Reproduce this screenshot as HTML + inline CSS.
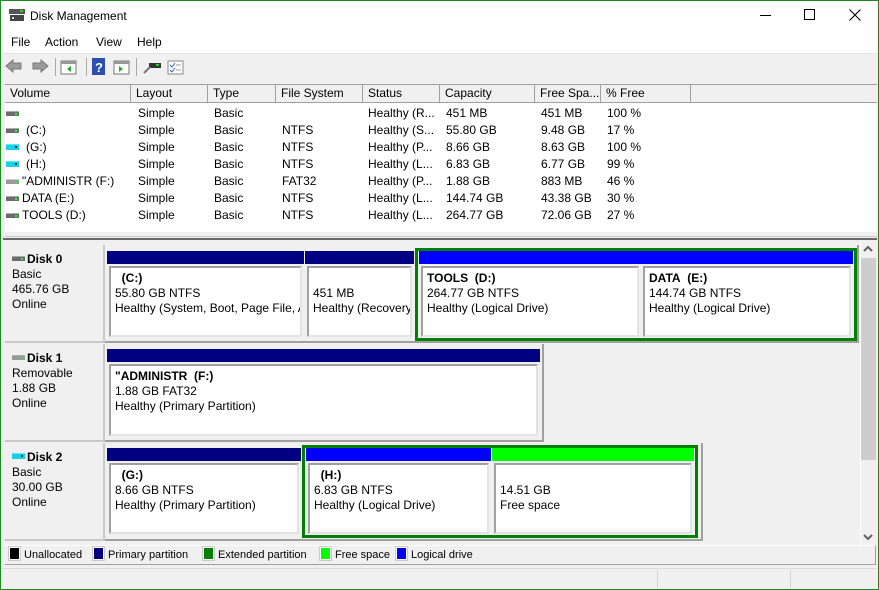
<!DOCTYPE html>
<html><head><meta charset="utf-8">
<style>
*{box-sizing:border-box;margin:0;padding:0}
body{width:879px;height:590px;position:relative;background:#f0f0f0;font-family:"Liberation Sans",sans-serif;font-size:12px;color:#000;overflow:hidden}
.a{position:absolute}
.t{position:absolute;white-space:nowrap;line-height:15px}
.hd{position:absolute;top:85px;height:18px;background:#f0f0f0;border-right:1px solid #a0a0a0;border-bottom:1px solid #a0a0a0;padding-left:5px;line-height:17px}
.row{position:absolute;left:5px;height:17px;line-height:17px;white-space:nowrap}
.row span{position:absolute}
.drv{position:absolute;top:6px;width:13px;height:5px;background:#6b6b6b;border-top:1px solid #aaa}
.drv:after{content:"";position:absolute;right:2px;top:1px;width:2px;height:2px;background:#2f2}
.drv.c{background:#1ccfe6;height:6px;top:5px;border-top:1px solid #5ee}
.drv.c:after{background:#333}
.p{position:absolute}
.bar{position:absolute;left:0;right:0;top:0;height:13px}
.box{position:absolute;left:2px;right:2px;top:15px;bottom:2px;background:#fff;border-top:2px solid #a0a0a0;border-left:2px solid #a0a0a0;border-right:2px solid #e3e3e3;border-bottom:2px solid #e3e3e3;padding:3px 0 0 4px}
.box div{line-height:15px;white-space:nowrap;overflow:hidden}
.b{font-weight:bold}
.disk{position:absolute;left:5px;width:100px;background:#f0f0f0;border-right:2px solid #c8c8c8;border-bottom:2px solid #c8c8c8;padding:7px 0 0 7px;line-height:15px}
.rowbox{position:absolute;border-right:2px solid #a0a0a0;border-bottom:2px solid #a0a0a0}
.ext{position:absolute;border:3px solid #008000}
.lg{position:absolute;top:547px;width:11px;height:13px;border:1px solid #fff;outline:1px solid #ccc}
.lt{position:absolute;top:548px;font-size:11px;line-height:15px;white-space:nowrap}
</style></head><body>
<div class="a" style="left:0;top:0;width:879px;height:590px;border:1px solid #1e8a1e;background:#f0f0f0"></div>
<div class="a" style="left:1px;top:1px;width:877px;height:52px;background:#fff"></div>
<svg class="a" style="left:9px;top:9px" width="16" height="14"><rect x="0" y="0" width="16" height="5" fill="#555"/><rect x="1" y="6" width="14" height="6" fill="#444"/><rect x="3" y="8" width="2" height="2" fill="#ddd"/><rect x="11" y="1" width="3" height="2" fill="#3c3"/></svg>
<div class="t" style="left:30px;top:9px">Disk Management</div>
<div class="a" style="left:760px;top:15px;width:11px;height:1px;background:#000"></div>
<div class="a" style="left:804px;top:9px;width:11px;height:11px;border:1px solid #000"></div>
<svg class="a" style="left:849px;top:9px" width="12" height="12"><path d="M0.5 0.5L11.5 11.5M11.5 0.5L0.5 11.5" stroke="#000" stroke-width="1.1"/></svg>
<div class="t" style="left:11px;top:35px">File</div>
<div class="t" style="left:45px;top:35px">Action</div>
<div class="t" style="left:96px;top:35px">View</div>
<div class="t" style="left:137px;top:35px">Help</div>
<div class="a" style="left:1px;top:53px;width:877px;height:1px;background:#e5e5e5"></div>
<svg class="a" style="left:5px;top:58px" width="180" height="18">
<path d="M1 8L8 2V5H16V11H8V14Z" fill="#9a9a9a" stroke="#7a7a7a"/>
<path d="M43 8L36 2V5H28V11H36V14Z" fill="#9a9a9a" stroke="#7a7a7a"/>
<rect x="50" y="0" width="1" height="18" fill="#aaa"/>
<rect x="56" y="3" width="15" height="13" fill="#fff" stroke="#777"/><rect x="56" y="3" width="15" height="3" fill="#999"/><path d="M66 8V14L62 11Z" fill="#2a2"/>
<rect x="81" y="0" width="1" height="18" fill="#aaa"/>
<rect x="87" y="0" width="13" height="17" fill="#2b4eb0"/><text x="90" y="14" fill="#fff" font-size="13" font-weight="bold" font-family="Liberation Sans">?</text>
<rect x="109" y="3" width="15" height="13" fill="#fff" stroke="#777"/><rect x="109" y="3" width="15" height="3" fill="#999"/><path d="M114 8V14L118 11Z" fill="#2a2"/>
<rect x="131" y="0" width="1" height="18" fill="#aaa"/>
<rect x="144" y="5" width="12" height="5" fill="#333"/><rect x="151" y="6" width="3" height="2" fill="#3c3"/><path d="M139 15L145 9" stroke="#777" stroke-width="2"/>
<rect x="163" y="3" width="15" height="13" fill="#fff" stroke="#888"/><path d="M165 7l2 2 3-4M165 12l2 2 3-4" stroke="#36c" fill="none"/><path d="M171 7h5M171 12h5" stroke="#999"/>
</svg>
<div class="a" style="left:5px;top:84px;width:872px;height:149px;background:#fff;border-top:1px solid #a0a0a0"></div>
<div class="hd" style="left:5px;width:126px">Volume</div>
<div class="hd" style="left:131px;width:77px">Layout</div>
<div class="hd" style="left:208px;width:68px">Type</div>
<div class="hd" style="left:276px;width:87px">File System</div>
<div class="hd" style="left:363px;width:77px">Status</div>
<div class="hd" style="left:440px;width:95px">Capacity</div>
<div class="hd" style="left:535px;width:66px">Free Spa...</div>
<div class="hd" style="left:601px;width:90px">% Free</div>
<div class="hd" style="left:691px;width:186px;border-right:none"></div>

<div class="row" style="top:105px"><i class="drv" style="left:1px"></i><span style="left:133px">Simple</span><span style="left:209px">Basic</span><span style="left:363px">Healthy (R...</span><span style="left:441px">451 MB</span><span style="left:536px">451 MB</span><span style="left:602px">100 %</span></div>
<div class="row" style="top:122px"><i class="drv" style="left:1px"></i><span style="left:21px">(C:)</span><span style="left:133px">Simple</span><span style="left:209px">Basic</span><span style="left:277px">NTFS</span><span style="left:363px">Healthy (S...</span><span style="left:441px">55.80 GB</span><span style="left:536px">9.48 GB</span><span style="left:602px">17 %</span></div>
<div class="row" style="top:139px"><i class="drv c" style="left:1px"></i><span style="left:21px">(G:)</span><span style="left:133px">Simple</span><span style="left:209px">Basic</span><span style="left:277px">NTFS</span><span style="left:363px">Healthy (P...</span><span style="left:441px">8.66 GB</span><span style="left:536px">8.63 GB</span><span style="left:602px">100 %</span></div>
<div class="row" style="top:156px"><i class="drv c" style="left:1px"></i><span style="left:21px">(H:)</span><span style="left:133px">Simple</span><span style="left:209px">Basic</span><span style="left:277px">NTFS</span><span style="left:363px">Healthy (L...</span><span style="left:441px">6.83 GB</span><span style="left:536px">6.77 GB</span><span style="left:602px">99 %</span></div>
<div class="row" style="top:173px"><i class="drv" style="left:1px;background:#999;border-top:1px solid #ccc"></i><span style="left:17px">"ADMINISTR (F:)</span><span style="left:133px">Simple</span><span style="left:209px">Basic</span><span style="left:277px">FAT32</span><span style="left:363px">Healthy (P...</span><span style="left:441px">1.88 GB</span><span style="left:536px">883 MB</span><span style="left:602px">46 %</span></div>
<div class="row" style="top:190px"><i class="drv" style="left:1px"></i><span style="left:17px">DATA (E:)</span><span style="left:133px">Simple</span><span style="left:209px">Basic</span><span style="left:277px">NTFS</span><span style="left:363px">Healthy (L...</span><span style="left:441px">144.74 GB</span><span style="left:536px">43.38 GB</span><span style="left:602px">30 %</span></div>
<div class="row" style="top:207px"><i class="drv" style="left:1px"></i><span style="left:17px">TOOLS (D:)</span><span style="left:133px">Simple</span><span style="left:209px">Basic</span><span style="left:277px">NTFS</span><span style="left:363px">Healthy (L...</span><span style="left:441px">264.77 GB</span><span style="left:536px">72.06 GB</span><span style="left:602px">27 %</span></div>
<div class="a" style="left:5px;top:232px;width:872px;height:5px;background:#f0f0f0;border-bottom:1px solid #c8c8c8"></div>
<div class="a" style="left:3px;top:238px;width:874px;height:2px;background:#696969"></div>

<div class="a" style="left:5px;top:240px;width:855px;height:305px;background:#f0f0f0"></div>
<div class="a" style="left:860px;top:242px;width:17px;height:303px;background:#f0f0f0;border-left:1px solid #fff"></div>
<div class="a" style="left:861px;top:258px;width:15px;height:202px;background:#cdcdcd"></div>
<svg class="a" style="left:863px;top:245px" width="10" height="8"><path d="M1 6L5 2L9 6" stroke="#606060" stroke-width="2" fill="none"/></svg>
<svg class="a" style="left:863px;top:533px" width="10" height="8"><path d="M1 2L5 6L9 2" stroke="#606060" stroke-width="2" fill="none"/></svg>

<div class="disk" style="top:245px;height:98px"><div class="b"><i class="drv" style="position:relative;display:inline-block;top:-2px;left:0;margin-right:2px"></i>Disk 0</div><div>Basic</div><div>465.76 GB</div><div>Online</div></div>
<div class="rowbox" style="left:105px;top:245px;width:754px;height:98px"></div>
<div class="p" style="left:107px;top:251px;width:197px;height:88px"><div class="bar" style="background:#000080"></div><div class="box"><div class="b">&nbsp;&nbsp;(C:)</div><div>55.80 GB NTFS</div><div>Healthy (System, Boot, Page File, A</div></div></div>
<div class="p" style="left:305px;top:251px;width:109px;height:88px"><div class="bar" style="background:#000080"></div><div class="box"><div>&nbsp;</div><div>451 MB</div><div>Healthy (Recovery</div></div></div>
<div class="ext" style="left:415px;top:248px;width:442px;height:93px"></div>
<div class="p" style="left:419px;top:251px;width:222px;height:88px"><div class="bar" style="background:#0000ff"></div><div class="box"><div class="b">TOOLS&nbsp; (D:)</div><div>264.77 GB NTFS</div><div>Healthy (Logical Drive)</div></div></div>
<div class="p" style="left:641px;top:251px;width:212px;height:88px"><div class="bar" style="background:#0000ff"></div><div class="box"><div class="b">DATA&nbsp; (E:)</div><div>144.74 GB NTFS</div><div>Healthy (Logical Drive)</div></div></div>

<div class="disk" style="top:344px;height:98px"><div class="b"><i class="drv" style="position:relative;display:inline-block;top:-2px;left:0;margin-right:2px;background:#999"></i>Disk 1</div><div>Removable</div><div>1.88 GB</div><div>Online</div></div>
<div class="rowbox" style="left:105px;top:344px;width:439px;height:98px"></div>
<div class="p" style="left:107px;top:349px;width:433px;height:89px"><div class="bar" style="background:#000080"></div><div class="box"><div class="b">"ADMINISTR&nbsp; (F:)</div><div>1.88 GB FAT32</div><div>Healthy (Primary Partition)</div></div></div>

<div class="disk" style="top:443px;height:98px"><div class="b"><i class="drv c" style="position:relative;display:inline-block;top:-2px;left:0;margin-right:2px"></i>Disk 2</div><div>Basic</div><div>30.00 GB</div><div>Online</div></div>
<div class="rowbox" style="left:105px;top:443px;width:598px;height:98px"></div>
<div class="p" style="left:107px;top:448px;width:194px;height:88px"><div class="bar" style="background:#000080"></div><div class="box"><div class="b">&nbsp;&nbsp;(G:)</div><div>8.66 GB NTFS</div><div>Healthy (Primary Partition)</div></div></div>
<div class="ext" style="left:302px;top:445px;width:396px;height:93px"></div>
<div class="p" style="left:306px;top:448px;width:185px;height:88px"><div class="bar" style="background:#0000ff"></div><div class="box"><div class="b">&nbsp;&nbsp;(H:)</div><div>6.83 GB NTFS</div><div>Healthy (Logical Drive)</div></div></div>
<div class="p" style="left:492px;top:448px;width:202px;height:88px"><div class="bar" style="background:#00ff00"></div><div class="box"><div>&nbsp;</div><div>14.51 GB</div><div>Free space</div></div></div>

<div class="a" style="left:5px;top:545px;width:871px;height:20px;background:#f0f0f0;border-top:1px solid #fff;border-right:1px solid #a0a0a0;border-bottom:1px solid #a0a0a0"></div>
<div class="lg" style="left:9px;background:#000"></div><div class="lt" style="left:24px">Unallocated</div>
<div class="lg" style="left:93px;background:#000080"></div><div class="lt" style="left:108px">Primary partition</div>
<div class="lg" style="left:203px;background:#008000"></div><div class="lt" style="left:218px">Extended partition</div>
<div class="lg" style="left:320px;background:#00ff00"></div><div class="lt" style="left:335px">Free space</div>
<div class="lg" style="left:396px;background:#0000ff"></div><div class="lt" style="left:411px">Logical drive</div>
<div class="a" style="left:1px;top:568px;width:877px;height:1px;background:#dcdcdc"></div>
<div class="a" style="left:657px;top:570px;width:1px;height:17px;background:#d5d5d5"></div>
<div class="a" style="left:790px;top:570px;width:1px;height:17px;background:#d5d5d5"></div>
<div class="a" style="left:0;top:0;width:879px;height:590px;border:1px solid #1e8a1e;pointer-events:none"></div>
</body></html>
